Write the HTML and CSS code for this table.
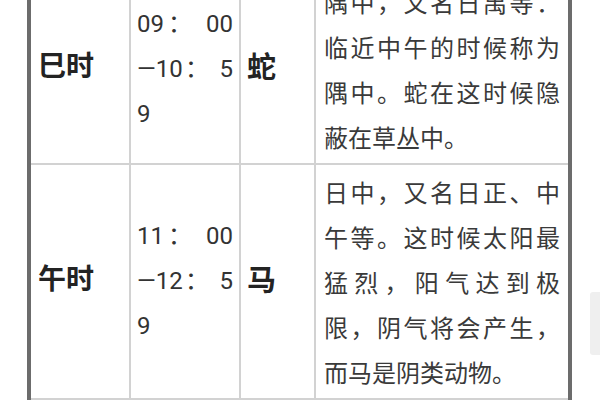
FILE: index.html
```html
<!DOCTYPE html>
<html lang="zh-CN">
<head>
<meta charset="utf-8">
<title>十二时辰</title>
<link rel="stylesheet" href="styles.css">
</head>
<body>
<div class="page">
  <div class="table">
    <div class="cell label">巳时</div>
    <div class="cell time">09： 00—10： 59</div>
    <div class="cell animal">蛇</div>
    <div class="cell desc">隅中，又名日禺等：临近中午的时候称为隅中。蛇在这时候隐蔽在草丛中。</div>

    <div class="cell label">午时</div>
    <div class="cell time">11： 00—12： 59</div>
    <div class="cell animal">马</div>
    <div class="cell desc">日中，又名日正、中午等。这时候太阳最猛烈，阳气达到极限，阴气将会产生，而马是阴类动物。</div>
  </div>
  <div class="scroll-thumb"></div>
</div>
</body>
</html>
```
FILE: styles.css
```css
html, body {
  margin: 0;
  padding: 0;
  background: #ffffff;
}

body {
  width: 600px;
  height: 400px;
  overflow: hidden;
  font-family: Roboto, "Noto Sans CJK SC", sans-serif;
  color: #333333;
}

.page {
  position: relative;
  width: 600px;
  height: 400px;
}

.table {
  display: grid;
  grid-template-columns: 98px 108px 73px 252px;
  column-gap: 2px;
  row-gap: 2px;
  width: 537px;
  margin-left: 27px;
  margin-top: -25px;
  padding-bottom: 2px;
  background: #d2d2d2;
  border-left: 4px solid #6c6c6c;
  border-right: 4px solid #6c6c6c;
}

.cell {
  background: #ffffff;
  display: flex;
  align-items: center;
  box-sizing: border-box;
}

.label {
  padding: 0 6px 10px 7px;
  font-family: "Noto Sans CJK SC", sans-serif;
  font-weight: 700;
  font-size: 28px;
  color: #232323;
}

.animal {
  padding: 0 6px 8px 6px;
  font-family: "Noto Sans CJK SC", sans-serif;
  font-weight: 700;
  font-size: 29px;
  color: #232323;
}

.time {
  padding: 0 6px;
  font-size: 24px;
  line-height: 45px;
  text-align: justify;
  word-break: break-all;
  color: #333333;
}

.desc {
  display: block;
  padding: 4px 8px;
  font-family: "Noto Sans CJK SC", sans-serif;
  font-size: 24px;
  line-height: 45px;
  text-align: justify;
  color: #3a3a3a;
}

.scroll-thumb {
  position: absolute;
  left: 590px;
  top: 317px;
  width: 10px;
  height: 63px;
  background: #efefef;
  border-radius: 3px 0 0 3px;
}
```
